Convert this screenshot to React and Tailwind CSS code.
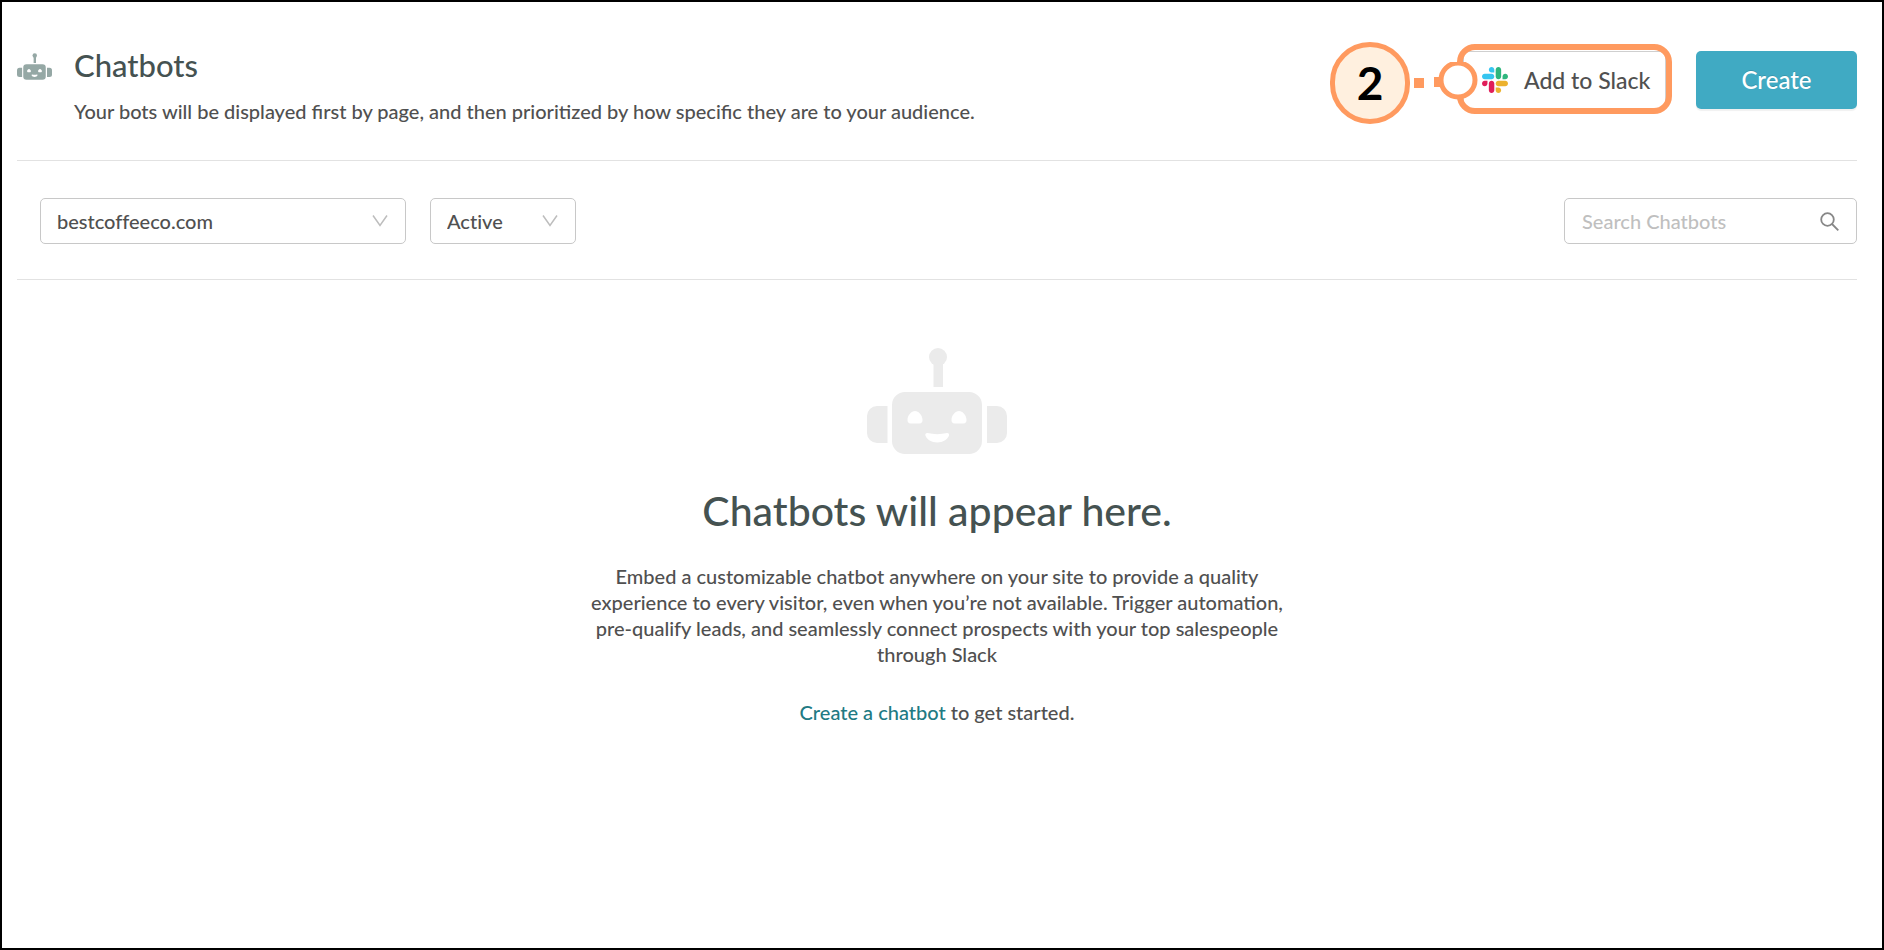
function Robot({ className }) {
  return (
    <svg viewBox="0 0 140 106" className={className} fill="currentColor" aria-hidden="true">
      <circle cx="71" cy="9" r="9" />
      <rect x="66.5" y="12" width="9.5" height="27" />
      <path d="M20.500 58H10A10 10 0 0 0 0 68v17a10 10 0 0 0 10 10h10.500z" />
      <path d="M120 58h10a10 10 0 0 1 10 10v17a10 10 0 0 1-10 10h-10z" />
      <path
        fillRule="evenodd"
        d="M38 44h64a13 13 0 0 1 13 13v36a13 13 0 0 1-13 13H38a13 13 0 0 1-13-13V57a13 13 0 0 1 13-13z
        M40.500 72c0-5 4-9 7.500-9s7.500 4 7.500 9c0 2-1 3.500-3 3.500h-9c-2 0-3-1.500-3-3.500z
        M84.500 72c0-5 4-9 7.500-9s7.500 4 7.500 9c0 2-1 3.500-3 3.500h-9c-2 0-3-1.500-3-3.500z
        M60.500 85c6.500 1.500 13 1.500 19.500 0 1.500-.2 2.500 1 2 2.500-1.500 4-6 7-11.800 7s-10.300-3-11.800-7c-.5-1.500.6-2.700 2.100-2.500z"
      />
    </svg>
  );
}

function SlackLogo() {
  return (
    <svg viewBox="0 0 122.8 122.8" className="w-[26px] h-[26px] shrink-0" aria-hidden="true">
      <path fill="#e01e5a" d="M25.800 77.600c0 7.100-5.800 12.900-12.900 12.900S0 84.700 0 77.600s5.800-12.900 12.900-12.900h12.900v12.900zM32.300 77.600c0-7.100 5.800-12.900 12.900-12.900s12.900 5.800 12.900 12.900v32.300c0 7.100-5.800 12.900-12.900 12.900s-12.900-5.800-12.900-12.900V77.600z" />
      <path fill="#36c5f0" d="M45.200 25.800c-7.100 0-12.900-5.800-12.900-12.900S38.100 0 45.200 0s12.900 5.800 12.900 12.900v12.900H45.200zM45.200 32.300c7.100 0 12.900 5.800 12.900 12.900s-5.800 12.900-12.900 12.900H12.900C5.800 58.100 0 52.300 0 45.200s5.800-12.900 12.900-12.900h32.300z" />
      <path fill="#2eb67d" d="M97 45.200c0-7.100 5.800-12.900 12.900-12.900s12.900 5.800 12.900 12.900-5.800 12.900-12.900 12.900H97V45.200zM90.500 45.200c0 7.100-5.800 12.900-12.900 12.900s-12.900-5.800-12.900-12.900V12.900C64.700 5.800 70.500 0 77.600 0s12.900 5.800 12.900 12.900v32.300z" />
      <path fill="#ecb22e" d="M77.600 97c7.100 0 12.900 5.800 12.900 12.900s-5.800 12.900-12.900 12.900-12.900-5.800-12.900-12.900V97h12.900zM77.600 90.500c-7.100 0-12.900-5.800-12.900-12.900s5.800-12.900 12.900-12.900h32.300c7.100 0 12.900 5.800 12.900 12.900s-5.800 12.900-12.900 12.900H77.600z" />
    </svg>
  );
}

function Callout({ number }) {
  return (
    <>
      <div className="absolute -inset-x-1.5 -top-[7px] -bottom-[5px] rounded-[18px] border-6 border-[#ff9a5f] pointer-events-none" />
      <div className="absolute right-full -top-[9px] -mr-[15px] flex items-center pointer-events-none">
        <div className="w-20 h-[82px] rounded-full border-[5px] border-[#ff9a5f] bg-[#fff0df] flex items-center justify-center text-black text-[46px] font-bold">
          {number}
        </div>
        <svg viewBox="0 0 68 42" className="w-[68px] h-[42px]" fill="#ff9a5f" aria-hidden="true">
          <rect x="4" y="16" width="10" height="10" />
          <rect x="24" y="15" width="10" height="10" />
          <circle cx="48" cy="18" r="17" fill="#fff" stroke="#ff9a5f" strokeWidth="5" />
        </svg>
      </div>
    </>
  );
}

function Select({ label, options, className }) {
  return (
    <div className={"relative " + className}>
      <select
        aria-label={label}
        className="w-full h-[46px] appearance-none rounded-[5px] border border-[#c8c8c8] bg-white pl-4 pr-12 text-xl text-[#505050] [font-variant-ligatures:none]"
      >
        {options.map((option) => (
          <option key={option}>{option}</option>
        ))}
      </select>
      <svg
        viewBox="0 0 16 14"
        className="absolute right-[18px] top-4 w-4 h-3.5 pointer-events-none"
        fill="none"
        stroke="#bdbdbd"
        strokeWidth="1.5"
        aria-hidden="true"
      >
        <path d="M1 1.500l7 10 7-10" />
      </svg>
    </div>
  );
}

export default function App() {
  return (
    <div className="min-h-screen border-2 border-black bg-white pl-[15px] pr-[25px] font-['Lato',sans-serif] text-xl font-medium text-[#505050]">
      <header className="flex items-start border-b border-[#e2e2e2] pt-[42px] pb-[33px]">
        <Robot className="w-[35px] h-[27px] mt-[9px] mr-[22px] shrink-0 text-[#95a8a5]" />
        <div className="flex-1">
          <h1 className="text-[31px] leading-[42px] font-medium text-[#455251]">Chatbots</h1>
          <p className="mt-[9px] leading-8">
            Your bots will be displayed first by page, and then prioritized by how specific they are to your audience.
          </p>
        </div>
        <div className="flex gap-[30px] mt-[7px]">
          <div className="relative">
            <button className="flex items-center gap-4 h-[58px] w-[203px] pl-[18px] rounded-md border border-[#cfcfcf] text-[23px] whitespace-nowrap">
              <SlackLogo />
              Add to Slack
            </button>
            <Callout number={2} />
          </div>
          <button className="h-[58px] w-[161px] rounded-[5px] bg-[#40aac3] text-2xl text-white shadow-[0_2px_1px_rgba(0,0,0,0.06)] text-shadow-[0_-1px_0_rgba(0,0,0,0.12)]">
            Create
          </button>
        </div>
      </header>

      <div className="flex items-center border-b border-[#e2e2e2] pl-[23px] pt-[37px] pb-[35px]">
        <Select label="Site" options={["bestcoffeeco.com"]} className="w-[366px]" />
        <Select label="Status" options={["Active", "Inactive"]} className="w-[146px] ml-6" />
        <div className="relative ml-auto w-[293px]">
          <input
            type="text"
            aria-label="Search Chatbots"
            placeholder="Search Chatbots"
            className="block w-full h-[46px] rounded-[5px] border border-[#c8c8c8] pl-[17px] pr-12 text-xl placeholder:text-[#bfbfbf]"
          />
          <svg
            viewBox="0 0 19 19"
            className="absolute right-[18px] top-3.5 w-[19px] h-[19px]"
            fill="none"
            stroke="#878787"
            strokeWidth="1.8"
            aria-hidden="true"
          >
            <circle cx="7.500" cy="7.500" r="6.300" />
            <path d="M12 12l6.300 6.300" />
          </svg>
        </div>
      </div>

      <main className="flex flex-col items-center pt-[68px] text-center">
        <Robot className="w-[140px] h-[106px] text-[#ebebeb]" />
        <h2 className="mt-[27px] text-[41px] leading-[60px] font-medium text-[#455251]">Chatbots will appear here.</h2>
        <p className="mt-[22px] w-[720px] max-w-full leading-[26px]">
          Embed a customizable chatbot anywhere on your site to provide a quality experience to every visitor, even when
          you’re not available. Trigger automation, pre-qualify leads, and seamlessly connect prospects with your top
          salespeople through Slack
        </p>
        <p className="mt-8 leading-[26px]">
          <a href="#" className="text-[#217a83]">
            Create a chatbot
          </a>{" "}
          to get started.
        </p>
      </main>
    </div>
  );
}
